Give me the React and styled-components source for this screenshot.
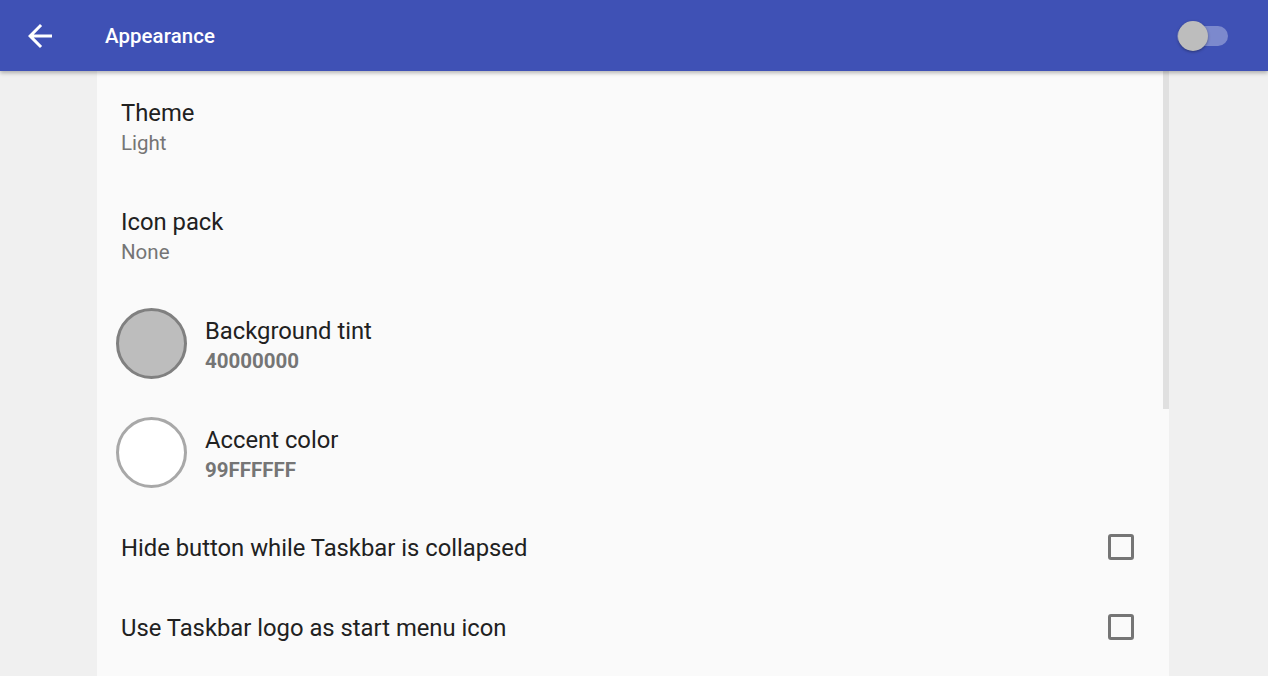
import React from "react"
import styled, { createGlobalStyle } from "styled-components"

const GlobalStyle = createGlobalStyle`
  html, body {
    margin: 0;
    padding: 0;
    background: #f0f0f0;
    font-family: Roboto, "Noto Sans", sans-serif;
    overflow: hidden;
  }
  #root {
    min-height: 100vh;
  }
`

const Page = styled.div`
  display: flex;
  flex-direction: column;
  height: 676px;
  background: #f0f0f0;
`

const Toolbar = styled.header`
  position: relative;
  z-index: 2;
  flex: none;
  display: flex;
  align-items: center;
  height: 71px;
  padding: 0 40px 0 22px;
  background: #3f51b5;
  box-shadow: 0 2px 4px rgba(0, 0, 0, 0.28);
`

const BackButton = styled.button`
  display: flex;
  align-items: center;
  justify-content: center;
  width: 36px;
  height: 36px;
  padding: 0;
  border: none;
  background: none;
  cursor: pointer;
`

const Title = styled.h1`
  flex: 1;
  margin: 0 0 0 47px;
  font-size: 20.4px;
  font-weight: 500;
  color: #fff;
  letter-spacing: 0.1px;
`

const Switch = styled.div`
  position: relative;
  width: 51px;
  height: 30px;
  display: flex;
  align-items: center;
`

const Track = styled.div`
  width: 51px;
  height: 20px;
  border-radius: 10px;
  background: rgba(255, 255, 255, 0.32);
`

const Thumb = styled.div`
  position: absolute;
  left: 1px;
  top: 0;
  width: 30px;
  height: 30px;
  border-radius: 50%;
  background: #bdbdbd;
  box-shadow: 0 1px 3px rgba(0, 0, 0, 0.35);
`

const Body = styled.main`
  flex: 1;
  display: flex;
  padding-left: 97px;
  min-height: 0;
`

const Panel = styled.section`
  position: relative;
  width: 1072px;
  background: #fafafa;
  overflow: hidden;
`

const Scrollbar = styled.div`
  position: absolute;
  top: 0;
  right: 0;
  width: 6px;
  height: 338px;
  background: #e0e0e0;
`

const Row = styled.div`
  display: flex;
  align-items: center;
  height: ${(p) => p.$height || 109}px;
  padding: 0 35px 0 ${(p) => (p.$swatch ? 19 : 24)}px;
`

const Texts = styled.div`
  flex: 1;
  display: flex;
  flex-direction: column;
  gap: 4px;
  padding-top: ${(p) => (p.$single ? 2 : 4)}px;
`

const RowTitle = styled.div`
  font-size: 23.8px;
  line-height: 28px;
  color: #212121;
`

const RowSummary = styled.div`
  font-size: 20.5px;
  line-height: 25px;
  color: #757575;
  font-weight: ${(p) => (p.$bold ? 700 : 400)};
`

const Swatch = styled.div`
  flex: none;
  box-sizing: border-box;
  width: 71px;
  height: 71px;
  margin-right: 18px;
  border-radius: 50%;
  background: ${(p) => p.$fill};
  border: 3px solid ${(p) => p.$ring};
`

const Checkbox = styled.div`
  flex: none;
  box-sizing: border-box;
  width: 26px;
  height: 26px;
  border: 3px solid #757575;
  border-radius: 3px;
`

const ArrowBack = () => (
  <svg width="36" height="36" viewBox="0 0 24 24" fill="#fff">
    <path d="M20 11H7.83l5.59-5.59L12 4l-8 8 8 8 1.41-1.41L7.83 13H20v-2z" />
  </svg>
)

const App = () => {
  return (
    <Page>
      <GlobalStyle />
      <Toolbar>
        <BackButton aria-label="Back">
          <ArrowBack />
        </BackButton>
        <Title>Appearance</Title>
        <Switch>
          <Track />
          <Thumb />
        </Switch>
      </Toolbar>
      <Body>
        <Panel>
          <Row>
            <Texts>
              <RowTitle>Theme</RowTitle>
              <RowSummary>Light</RowSummary>
            </Texts>
          </Row>
          <Row>
            <Texts>
              <RowTitle>Icon pack</RowTitle>
              <RowSummary>None</RowSummary>
            </Texts>
          </Row>
          <Row $swatch>
            <Swatch $fill="#bdbdbd" $ring="#808080" />
            <Texts>
              <RowTitle>Background tint</RowTitle>
              <RowSummary $bold>40000000</RowSummary>
            </Texts>
          </Row>
          <Row $swatch>
            <Swatch $fill="#ffffff" $ring="#a8a8a8" />
            <Texts>
              <RowTitle>Accent color</RowTitle>
              <RowSummary $bold>99FFFFFF</RowSummary>
            </Texts>
          </Row>
          <Row $height={80}>
            <Texts $single>
              <RowTitle>Hide button while Taskbar is collapsed</RowTitle>
            </Texts>
            <Checkbox />
          </Row>
          <Row $height={80}>
            <Texts $single>
              <RowTitle>Use Taskbar logo as start menu icon</RowTitle>
            </Texts>
            <Checkbox />
          </Row>
          <Scrollbar />
        </Panel>
      </Body>
    </Page>
  )
}

export default App
